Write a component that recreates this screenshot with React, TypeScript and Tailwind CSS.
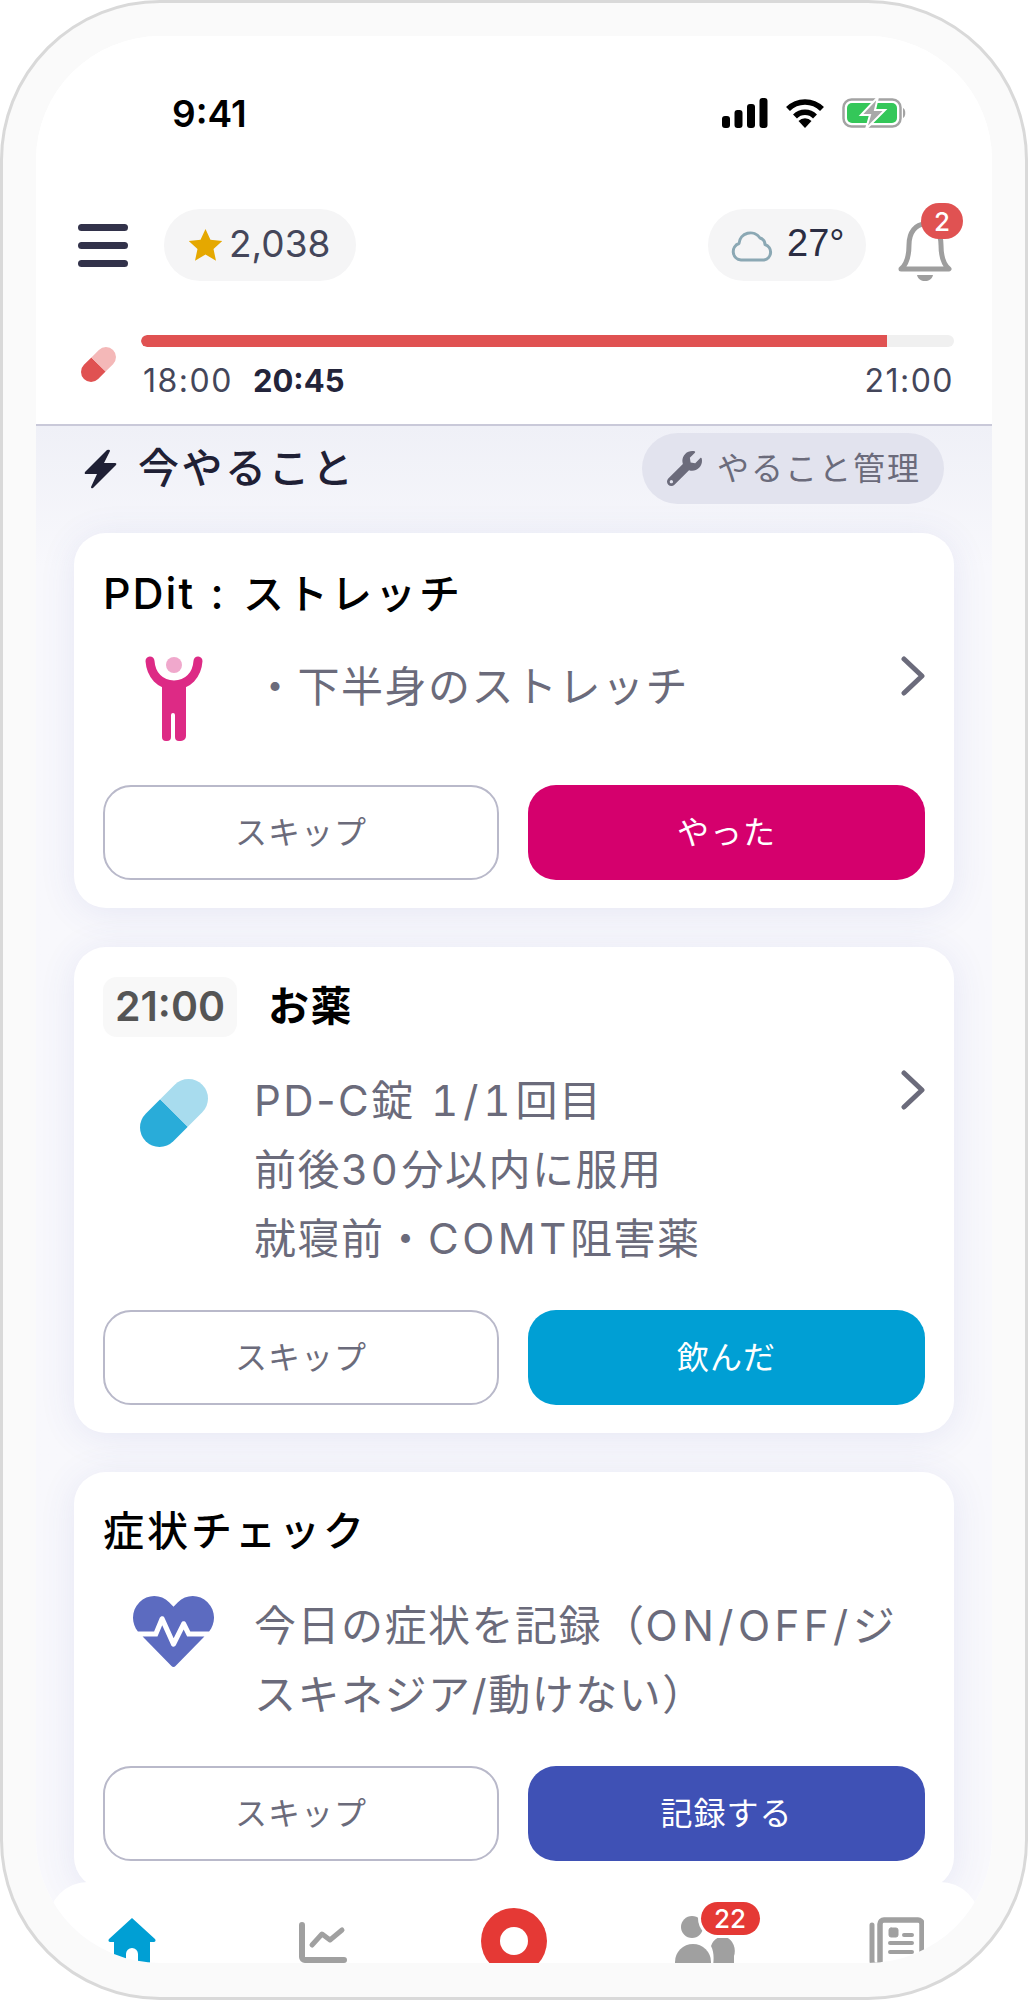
import type { ReactNode } from "react";
import { FaWrench, FaHeartbeat } from "react-icons/fa";

function Capsule({ size, dark, light }: { size: number; dark: string; light: string }) {
  return (
    <svg width={size} height={size} viewBox="0 0 68 66">
      <g transform="rotate(-45 34 33)">
        <path d="M34 13.5H13.5a19.5 19.5 0 0 0 0 39H34z" fill={dark} />
        <path d="M34 13.5H54.5a19.5 19.5 0 0 1 0 39H34z" fill={light} />
      </g>
    </svg>
  );
}

function Figure() {
  return (
    <svg width="58" height="86" viewBox="0 0 58 86">
      <circle cx="29" cy="9" r="8" fill="#f0a8cc" />
      <path d="M5 5c1 14 10 24 24 24s23-10 24-24" fill="none" stroke="#dd2a85" strokeWidth="9" strokeLinecap="round" />
      <path d="M17 27h24v53a5 5 0 0 1-5 5h-2a4 4 0 0 1-4-4V59a2 2 0 0 0-4 0v22a4 4 0 0 1-4 4h-1a4 4 0 0 1-4-4z" fill="#dd2a85" />
    </svg>
  );
}

function Chevron() {
  return (
    <svg width="24" height="40" viewBox="0 0 24 40" className="mt-[4px] shrink-0">
      <path d="M3 3l18 17L3 37" fill="none" stroke="#6b6b7b" strokeWidth="5" strokeLinecap="round" strokeLinejoin="round" />
    </svg>
  );
}

function Actions({ done, color }: { done: string; color: string }) {
  return (
    <div className="grid grid-cols-[396px_397px] gap-[29px] mt-[37px]">
      <button className="h-[95px] rounded-[28px] border-2 border-[#b9b9ca] bg-white text-[32px] tracking-[1px] text-[#6b6b7b]">スキップ</button>
      <button className={`h-[95px] rounded-[28px] text-[32px] tracking-[1px] text-white ${color}`}>{done}</button>
    </div>
  );
}

function Card({ title, icon, iconClass, lines, chevron, done, color }: { title: ReactNode; icon: ReactNode; iconClass: string; lines: ReactNode[]; chevron?: boolean; done: string; color: string }) {
  return (
    <section className="bg-white rounded-[32px] px-[29px] pt-[30px] pb-[28px] shadow-[0_4px_36px_rgba(70,80,180,0.10)]">
      <div className="h-[60px] flex items-center text-[41px] font-medium text-black">{title}</div>
      <div className="flex items-start mt-[29px] min-h-[96px]">
        <div className={`w-[151px] shrink-0 ${iconClass}`}>{icon}</div>
        <div className="flex-1 text-[42px] leading-[69px] tracking-[1.500px] text-[#6b6b7b] whitespace-nowrap">
          {lines.map((l, i) => (
            <div key={i}>{l}</div>
          ))}
        </div>
        {chevron && <Chevron />}
      </div>
      <Actions done={done} color={color} />
    </section>
  );
}

export default function App() {
  return (
    <div className="w-[1028px] h-[2000px] bg-white font-['Inter','Noto_Sans_CJK_JP',sans-serif]">
      <div className="h-full rounded-[160px] border-[3px] border-[#d9d9d9] bg-[#fafafa] p-[33px]">
        <div className="relative h-[1927px] rounded-[124px] bg-white overflow-hidden flex flex-col">
          <header className="bg-white h-[390px] border-b-2 border-[#c9c9d9] shrink-0">
            <div className="h-[154px] flex items-center justify-between pl-[136px] pr-[84px]">
              <span className="text-[37px] font-semibold text-black mt-[1px]">9:41</span>
              <div className="flex items-center gap-[17px]">
                <svg width="46" height="30" viewBox="0 0 46 30">
                  <rect x="0" y="18" width="8" height="12" rx="3" />
                  <rect x="12.5" y="12" width="8" height="18" rx="3" />
                  <rect x="25" y="6" width="8" height="24" rx="3" />
                  <rect x="37.5" y="0" width="8" height="30" rx="3" />
                </svg>
                <svg width="40" height="30" viewBox="0 0 40 30">
                  <path d="M3 11a24 24 0 0 1 34 0M10 18.5a14 14 0 0 1 20 0" fill="none" stroke="#000" strokeWidth="5.5" />
                  <path d="M13.5 23a9 9 0 0 1 13 0L20 30z" />
                </svg>
                <svg width="66" height="32" viewBox="0 0 66 32">
                  <rect x="1.5" y="2.5" width="57" height="27" rx="8" fill="none" stroke="#a3a3a3" strokeWidth="2.5" />
                  <rect x="5" y="6" width="50" height="20" rx="5" fill="#34c759" />
                  <path d="M61 11c3 1 3 9 0 10z" fill="#a3a3a3" />
                  <path d="M36 0L19 18h9l-4 14 19-19h-10z" fill="#a8a8a8" stroke="#fff" strokeWidth="2" />
                </svg>
              </div>
            </div>
            <div className="mt-[19px] h-[72px] flex items-center pl-[42px] pr-[40px]">
              <svg width="50" height="43" viewBox="0 0 50 43" className="shrink-0" fill="#32324a">
                <rect width="50" height="7" rx="3.5" />
                <rect y="18" width="50" height="7" rx="3.5" />
                <rect y="36" width="50" height="7" rx="3.5" />
              </svg>
              <div className="ml-[36px] h-[72px] w-[192px] rounded-full bg-[#f5f5f6] flex items-center pl-[24px] gap-[6px]">
                <svg width="35" height="34" viewBox="0 0 24 23"><path d="M12 .5l3.400 7.400 8.100.9-6 5.500 1.700 8L12 18l-7.200 4.300 1.700-8-6-5.500 8.100-.9z" fill="#e5a800" /></svg>
                <span className="text-[37px] text-[#44465a] -mt-[3px]">2,038</span>
              </div>
              <div className="flex-1" />
              <div className="h-[72px] w-[158px] rounded-full bg-[#f5f5f6] flex items-center pl-[23px] gap-[13px]">
                <svg width="43" height="34" viewBox="0 0 43 34"><path d="M10 32a8.500 8.500 0 0 1-2-16.500A11.500 11.500 0 0 1 29 10a7 7 0 0 1 5 6.500A8 8 0 0 1 33 32z" fill="none" stroke="#8ba8b4" strokeWidth="3" strokeLinejoin="round" /></svg>
                <span className="text-[38px] text-[#2b2d42] -mt-[3px] font-['Liberation_Sans',sans-serif]">27°</span>
              </div>
              <div className="relative ml-[31px] w-[55px] h-[62px] shrink-0 top-[5px]">
                <svg width="56" height="62" viewBox="0 0 56 62">
                  <path d="M4 50c6-5 8-12 8-24 0-13 7-21 16-21s16 8 16 21c0 12 2 19 8 24z" fill="none" stroke="#9e9e9e" strokeWidth="5" strokeLinejoin="round" />
                  <path d="M20 56h16c-1 4-4 6-8 6s-7-2-8-6z" fill="#9e9e9e" />
                </svg>
                <span className="absolute -top-[16px] left-[24px] w-[42px] h-[36px] rounded-full bg-[#e05252] text-white text-[26px] font-medium flex items-center justify-center">2</span>
              </div>
            </div>
            <div className="mt-[54px] flex items-start pl-[45px] pr-[38px]">
              <div className="mt-[12px] w-[60px] shrink-0">
                <Capsule size={35} dark="#e05252" light="#f4b8b8" />
              </div>
              <div className="flex-1">
                <div className="h-[12px] rounded-full bg-[#f0f0f0] overflow-hidden">
                  <div className="h-full w-[91.700%] bg-[#e05252] rounded-l-full" />
                </div>
                <div className="flex items-center mt-[14px] pl-[2px] text-[32px] tracking-[1.500px] leading-[40px] text-[#44465a]">
                  <span>18:00</span>
                  <span className="ml-[20px] text-[31px] tracking-[0px] font-bold text-[#23243a]">20:45</span>
                  <span className="ml-auto">21:00</span>
                </div>
              </div>
            </div>
          </header>

          <main className="flex-1 bg-gradient-to-b from-[#eff0f7] to-[#f8f8fc] to-[140px] px-[38px] pt-[7px]">
            <div className="h-[71px] flex items-center justify-between pl-[9px] pr-[10px]">
              <div className="flex items-center gap-[20px] text-[41px] font-medium tracking-[2.500px] text-[#1f2035]">
                <svg width="35" height="40" viewBox="0 0 35 40" fill="#1f2035" className="shrink-0">
                  <path d="M24 1L2 23q-1 2 1 2h11L8 38q0 2 2 1l23-23q1-2-1-2H21l6-12q0-2-3-1z" />
                </svg>
                <span>今やること</span>
              </div>
              <div className="h-[71px] w-[302px] rounded-full bg-[#e2e3ee] flex items-center pl-[25px] gap-[15px] text-[32px] tracking-[2px] text-[#6b6b7b]">
                <FaWrench size={35} className="shrink-0" />
                <span>やること管理</span>
              </div>
            </div>
            <div className="mt-[29px] flex flex-col gap-[39px]">
              <Card
                title={
                  <span className="tracking-[3px]">
                    <span className="text-[43px] tracking-[2px]">PDit</span>
                    <span className="text-[43px] tracking-[4px]"> : </span>
                    ストレッチ
                  </span>
                }
                icon={<Figure />}
                iconClass="pl-[42px] pt-[4px]"
                lines={["・下半身のストレッチ"]}
                chevron
                done="やった"
                color="bg-[#d5006d]"
              />
              <Card
                title={
                  <>
                    <span className="h-[60px] w-[134px] rounded-[14px] bg-[#f8f8f8] text-[41px] font-semibold text-[#555555] flex items-center justify-center">21:00</span>
                    <span className="ml-[31px] font-bold tracking-[1.500px]">お薬</span>
                  </>
                }
                icon={<Capsule size={68} dark="#29acd9" light="#a8dcee" />}
                iconClass="pl-[37px] pt-[13px]"
                lines={[
                  <><span className="tracking-[2.500px]">PD-C</span>錠 <span className="ml-[3px] tabular-nums tracking-[5px]">1/1</span>回目</>,
                  <>前後<span className="tracking-[4px]">30</span>分以内に服用</>,
                  <>就寝前・<span className="tracking-[3.500px]">COMT</span>阻害薬</>,
                ]}
                chevron
                done="飲んだ"
                color="bg-[#009fd4]"
              />
              <Card
                title={<span className="tracking-[3px]">症状チェック</span>}
                icon={<FaHeartbeat size={81} className="text-[#5c6bc0]" />}
                iconClass="pl-[30px]"
                lines={[<>今日の症状を記録（<span className="tracking-[4.500px]">ON/OFF/</span>ジ</>, "スキネジア/動けない）"]}
                done="記録する"
                color="bg-[#3f51b5]"
              />
            </div>
          </main>

          <nav className="absolute bottom-0 left-[12px] right-[12px] h-[81px] bg-white rounded-t-[40px]">
            <div className="-mx-[12px] grid grid-cols-5 h-full">
              <div className="flex justify-center pt-[36px]">
                <svg width="48" height="50" viewBox="0 0 48 50">
                  <path fillRule="evenodd" d="M24 0l23 21a2 2 0 0 1-1 3h-4v26H6V24H2a2 2 0 0 1-1-3zM18 50h12V36a6 6 0 0 0-12 0z" fill="#009fd4" />
                </svg>
              </div>
              <div className="flex justify-center pt-[39px]">
                <svg width="48" height="44" viewBox="0 0 48 44" fill="none" stroke="#a0a0a0" strokeLinecap="round" strokeLinejoin="round">
                  <path d="M3 4v32a3 3 0 0 0 3 3h39" strokeWidth="6" />
                  <path d="M13 24l10-11 8 6 12-10" strokeWidth="5" />
                </svg>
              </div>
              <div className="flex justify-center pt-[26px]">
                <div className="w-[66px] h-[66px] rounded-full bg-[#e53935] flex items-center justify-center shrink-0">
                  <div className="w-[28px] h-[28px] rounded-full bg-white" />
                </div>
              </div>
              <div className="relative flex justify-center pt-[34px]">
                <svg width="60" height="50" viewBox="0 0 60 50" fill="#a0a0a0">
                  <circle cx="17" cy="11" r="11" />
                  <circle cx="18" cy="46" r="18" />
                  <circle cx="46" cy="13" r="8" />
                  <path d="M36 30a12 14 0 0 1 23 10v10H38c1-8 1-14-2-20z" />
                </svg>
                <span className="absolute top-[20px] left-[91px] w-[59px] h-[33px] rounded-full bg-[#e53935] ring-[3px] ring-white text-white text-[26px] font-medium flex items-center justify-center">22</span>
              </div>
              <div className="flex justify-center pt-[35px]">
                <svg width="56" height="50" viewBox="0 0 56 50" fill="none" stroke="#a0a0a0" strokeLinecap="round" strokeLinejoin="round">
                  <path d="M4 8v36a4 4 0 0 0 4 4h4" strokeWidth="5" />
                  <path d="M12 50V7a4 4 0 0 1 4-4h34a4 4 0 0 1 4 4v43" strokeWidth="5.500" />
                  <rect x="21" y="11" width="9" height="9" rx="2" fill="#a0a0a0" strokeWidth="1" />
                  <path d="M36 18h8M22 26h22M22 35h22" strokeWidth="4" />
                </svg>
              </div>
            </div>
          </nav>
        </div>
      </div>
    </div>
  );
}
